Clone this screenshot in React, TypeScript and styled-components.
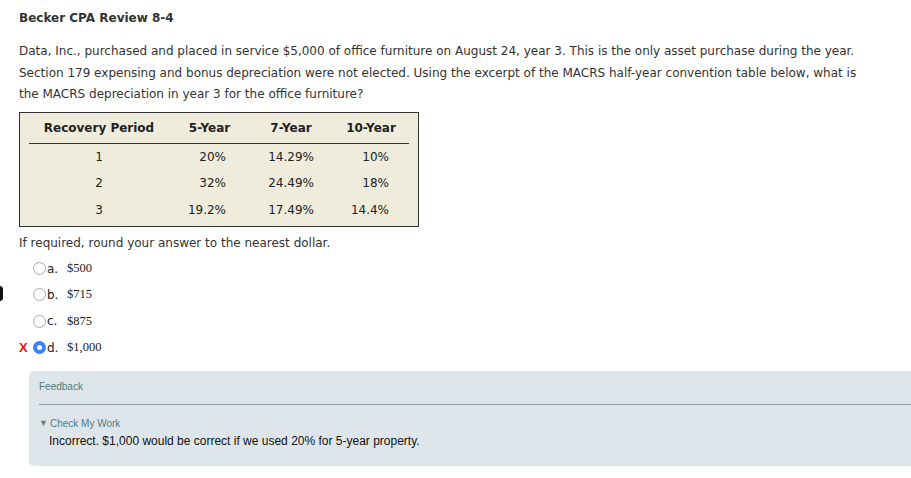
import React from "react";
import styled, { createGlobalStyle } from "styled-components";

const Global = createGlobalStyle`
  html, body { margin: 0; padding: 0; background: #fff; }
  body { font-family: "DejaVu Sans", Verdana, sans-serif; color: #333; }
`;

const Page = styled.div`
  position: relative;
  width: 911px;
  height: 478px;
  overflow: hidden;
  padding: 10px 0 0 19px;
  box-sizing: border-box;
`;

const EdgeMark = styled.div`
  position: absolute;
  left: -4px;
  top: 286px;
  width: 7px;
  height: 15px;
  border-radius: 4px;
  background: #111;
`;

const Title = styled.h1`
  margin: 0;
  font-size: 12px;
  font-weight: bold;
  line-height: 16px;
  color: #333;
`;

const Para = styled.p`
  margin: 15px 0 0;
  font-size: 12px;
  line-height: 21.5px;
  width: 860px;
  color: #333;
`;

const TableBox = styled.div`
  margin-top: 6px;
  width: 400px;
  height: 115px;
  box-sizing: border-box;
  border: 1px solid #333;
  background: #efecdc;
  padding: 0 9px;
`;

const Row = styled.div<{ $head?: boolean }>`
  display: grid;
  grid-template-columns: 140px 81px 82px 78px;
  height: ${(p) => (p.$head ? "30px" : "26.5px")};
  align-items: center;
  font-size: 12px;
  font-weight: ${(p) => (p.$head ? "bold" : "normal")};
  border-bottom: ${(p) => (p.$head ? "1px solid #333" : "none")};
  color: #222;
`;

const Cell = styled.div<{ $align?: string; $pr?: number }>`
  text-align: ${(p) => p.$align || "center"};
  padding-right: ${(p) => p.$pr || 0}px;
`;

const Note = styled.p`
  margin: 7px 0 0;
  font-size: 12px;
  line-height: 18px;
  color: #333;
`;

const Options = styled.div`
  margin-top: 4px;
  display: flex;
  flex-direction: column;
`;

const Option = styled.div`
  display: flex;
  align-items: center;
  height: 26.3px;
  position: relative;
  padding-left: 14px;
`;

const Mark = styled.span`
  position: absolute;
  left: 0;
  color: #ee1111;
  font-family: "Liberation Sans", Arial, sans-serif;
  font-weight: bold;
  font-size: 13px;
`;

const Radio = styled.span<{ $on?: boolean }>`
  width: 13px;
  height: 13px;
  box-sizing: border-box;
  border-radius: 50%;
  border: ${(p) => (p.$on ? "none" : "1px solid #a9a9a9")};
  background: ${(p) => (p.$on ? "#3b82f6" : "#fff")};
  display: inline-flex;
  align-items: center;
  justify-content: center;
  &::after {
    content: "";
    display: ${(p) => (p.$on ? "block" : "none")};
    width: 5px;
    height: 5px;
    border-radius: 50%;
    background: #fff;
  }
`;

const Letter = styled.span`
  font-size: 12px;
  color: #222;
  margin-left: 1px;
  width: 20px;
`;

const Amount = styled.span`
  font-family: "Liberation Serif", "Times New Roman", serif;
  font-size: 12.5px;
  color: #222;
`;

const Feedback = styled.div`
  margin-top: 10px;
  margin-left: 10px;
  width: 900px;
  height: 95px;
  background: #dfe6eb;
  border-radius: 5px;
  font-family: "Liberation Sans", Arial, sans-serif;
  box-sizing: border-box;
  padding: 9px 0 0 10px;
`;

const FbLabel = styled.div`
  font-size: 10px;
  color: #4f7d7f;
  height: 14px;
  line-height: 14px;
`;

const FbRule = styled.div`
  margin-top: 10px;
  height: 1px;
  background: #8f9a9a;
`;

const CheckHead = styled.div`
  margin-top: 13px;
  font-size: 10px;
  color: #4f7d7f;
  line-height: 11px;
  display: flex;
  align-items: center;
  gap: 2px;
`;

const Tri = styled.span`
  color: #777;
  font-size: 9px;
`;

const FbText = styled.div`
  margin-top: 5px;
  margin-left: 10px;
  font-size: 12px;
  color: #111;
  line-height: 14px;
`;

const rows = [
  ["1", "20%", "14.29%", "10%"],
  ["2", "32%", "24.49%", "18%"],
  ["3", "19.2%", "17.49%", "14.4%"],
];

const opts = [
  ["a.", "$500"],
  ["b.", "$715"],
  ["c.", "$875"],
  ["d.", "$1,000"],
];

export default function App() {
  return (
    <>
      <Global />
      <Page>
        <EdgeMark />
        <Title>Becker CPA Review 8-4</Title>
        <Para>
          Data, Inc., purchased and placed in service $5,000 of office furniture on August 24, year 3. This is the only
          asset purchase during the year. Section 179 expensing and bonus depreciation were not elected. Using the
          excerpt of the MACRS half-year convention table below, what is the MACRS depreciation in year 3 for the
          office furniture?
        </Para>
        <TableBox>
          <Row $head>
            <Cell>Recovery Period</Cell>
            <Cell>5-Year</Cell>
            <Cell>7-Year</Cell>
            <Cell>10-Year</Cell>
          </Row>
          {rows.map((r) => (
            <Row key={r[0]}>
              <Cell>{r[0]}</Cell>
              <Cell $align="right" $pr={24}>{r[1]}</Cell>
              <Cell $align="right" $pr={18}>{r[2]}</Cell>
              <Cell $align="right" $pr={21}>{r[3]}</Cell>
            </Row>
          ))}
        </TableBox>
        <Note>If required, round your answer to the nearest dollar.</Note>
        <Options>
          {opts.map(([l, a], i) => (
            <Option key={l}>
              {i === 3 && <Mark>X</Mark>}
              <Radio $on={i === 3} />
              <Letter>{l}</Letter>
              <Amount>{a}</Amount>
            </Option>
          ))}
        </Options>
        <Feedback>
          <FbLabel>Feedback</FbLabel>
          <FbRule />
          <CheckHead>
            <Tri>▼</Tri>Check My Work
          </CheckHead>
          <FbText>Incorrect. $1,000 would be correct if we used 20% for 5-year property.</FbText>
        </Feedback>
      </Page>
    </>
  );
}
